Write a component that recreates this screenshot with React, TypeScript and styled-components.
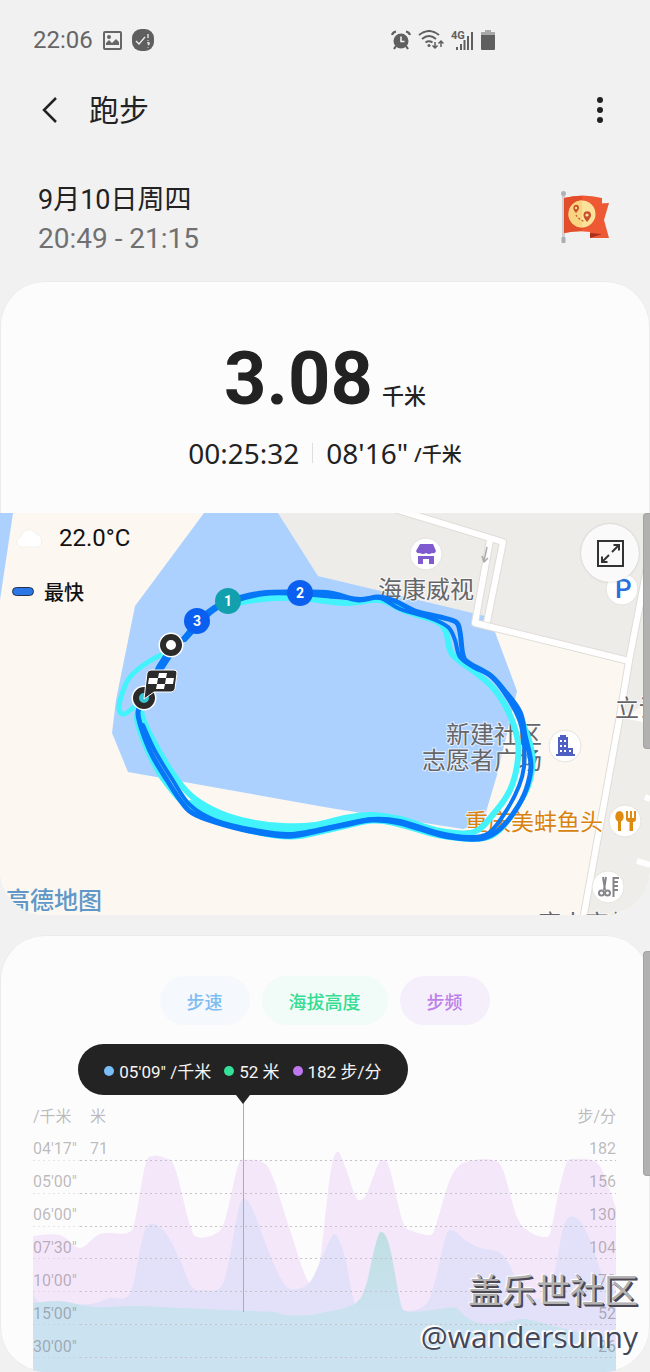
import React from 'react';
import styled, { createGlobalStyle } from 'styled-components';

const GlobalStyle = createGlobalStyle`
  *, *::before, *::after { box-sizing: border-box; }
  body {
    margin: 0;
    background: #f1f1f2;
    color: #222;
    font-family: Roboto, "Noto Sans CJK SC", sans-serif;
  }
  button { border: 0; padding: 0; background: none; font: inherit; color: inherit; cursor: pointer; }
  h1, p { margin: 0; font-weight: 400; }
  svg { display: block; }
`;

type Point = [number, number];

/** Turns a list of points into a smooth curve that passes through all of them. */
function curve(points: Point[]): string {
  const at = (i: number): Point => points[Math.max(0, Math.min(points.length - 1, i))];
  let d = `M${points[0][0]} ${points[0][1]}`;
  for (let i = 0; i < points.length - 1; i++) {
    const [a, b, c, e] = [at(i - 1), at(i), at(i + 1), at(i + 2)];
    d += `C${b[0] + (c[0] - a[0]) / 6} ${b[1] + (c[1] - a[1]) / 6} ${c[0] - (e[0] - b[0]) / 6} ${
      c[1] - (e[1] - b[1]) / 6
    } ${c[0]} ${c[1]}`;
  }
  return d;
}

/* ---------- page shell ---------- */

const Page = styled.main`
  position: relative;
  overflow: hidden;
`;

const StatusBar = styled.div`
  display: flex;
  align-items: center;
  height: 80px;
  padding: 0 33px;
  color: #666;
  font-size: 24px;
`;

const StatusGroup = styled.div<{ $share: number; $gap: number }>`
  display: flex;
  align-items: center;
  gap: ${(p) => p.$gap}px;
  flex: ${(p) => p.$share} 1 0;
`;

const TitleBar = styled.header`
  display: flex;
  align-items: center;
  height: 60px;
  padding: 0 38px;
`;

const Title = styled.h1`
  flex: 1;
  margin-left: 27px;
  padding-top: 2px;
  font-size: 30px;
  line-height: 40px;
`;

const IconButton = styled.button`
  display: flex;
  align-items: center;
  justify-content: center;
  width: 24px;
  height: 40px;
`;

const Session = styled.section`
  display: flex;
  justify-content: space-between;
  padding: 41px 38px 22px;
`;

const SessionDate = styled.p`
  font-size: 27px;
  line-height: 38px;
`;

const SessionTime = styled.p`
  font-size: 28px;
  line-height: 40px;
  color: #707070;
`;

const FlagSlot = styled.div`
  padding: 10px 2px 0 0;
`;

const CardFrame = styled.section`
  position: relative;
  & + & { margin-top: 20px; }
`;

const Card = styled.div`
  overflow: hidden;
  border-radius: 45px;
  background: #fcfcfc;
  box-shadow: inset 0 0 0 1px #ebebec;
`;

const ScrollThumb = styled.div<{ $top: number; $height: number }>`
  position: absolute;
  right: 0;
  top: ${(p) => p.$top}px;
  width: 7px;
  height: ${(p) => p.$height}px;
  border: 1px solid #a2a2a2;
  border-right: 0;
  border-radius: 4px 0 0 4px;
  background: #b1b1b1;
`;

/* ---------- summary ---------- */

const Summary = styled.div`
  display: flex;
  flex-direction: column;
  align-items: center;
  height: 232px;
  padding-top: 58px;
`;

const Distance = styled.p`
  display: flex;
  align-items: baseline;
  gap: 9px;
  height: 80px;
  font-size: 22px;
  font-weight: 500;
  line-height: 80px;
`;

const DistanceValue = styled.span`
  font-size: 74px;
  font-weight: 700;
`;

const Figures = styled.div`
  display: flex;
  align-items: center;
  height: 40px;
  margin-top: 14px;
  font-family: "Noto Sans", "Noto Sans CJK SC", sans-serif;
  font-size: 28px;
  line-height: 40px;
`;

const Divider = styled.span`
  width: 1px;
  height: 20px;
  margin: 0 13px;
  background: #dedede;
`;

const PaceUnit = styled.span`
  margin-left: 6px;
  padding-top: 4px;
  font-size: 20px;
  font-weight: 500;
`;

/* ---------- map ---------- */

const MapArea = styled.div`
  position: relative;
  height: 402px;
  background: #fcf8f1;
`;

const MapCanvas = styled.svg`
  width: 100%;
  height: 100%;
`;

const MapInfo = styled.div`
  position: absolute;
  left: 12px;
  top: 5px;
  color: #111;
`;

const InfoRow = styled.div<{ $strong?: boolean }>`
  display: flex;
  align-items: center;
  height: ${(p) => (p.$strong ? 66 : 40)}px;
  font-size: ${(p) => (p.$strong ? 20 : 24)}px;
  font-weight: ${(p) => (p.$strong ? 500 : 400)};
  gap: ${(p) => (p.$strong ? 10 : 14)}px;
`;

const FastSwatch = styled.span`
  width: 22px;
  height: 9px;
  border: 1px solid #27334d;
  border-radius: 5px;
  background: #2b77e8;
`;

const ExpandButton = styled.button`
  position: absolute;
  right: 11px;
  top: 11px;
  display: flex;
  align-items: center;
  justify-content: center;
  width: 58px;
  height: 58px;
  border-radius: 50%;
  background: #fafafa;
  box-shadow: 0 0 2px #9999;
`;

/* ---------- chart ---------- */

const ChartPanel = styled.div`
  height: 437px;
  padding: 41px 34px 0 33px;
`;

const Filters = styled.div`
  display: flex;
  justify-content: center;
  gap: 12px;
`;

const Pill = styled.button<{ $ink: string; $fill: string }>`
  height: 49px;
  padding: 0 27px;
  border-radius: 25px;
  background: ${(p) => p.$fill};
  color: ${(p) => p.$ink};
  font-size: 18px;
  font-weight: 500;
`;

const Chart = styled.div`
  position: relative;
  height: 347px;
  padding-top: 82px;
`;

const Plot = styled.svg`
  position: absolute;
  left: 0;
  top: 0;
  width: 100%;
  height: 100%;
`;

const AxisTable = styled.table`
  position: relative;
  width: 100%;
  border-collapse: collapse;
  color: rgba(70, 62, 70, 0.36);
  font-size: 16px;
  line-height: 20px;
  th, td {
    height: 33px;
    padding: 0 0 13px;
    font-weight: 400;
    text-align: left;
    vertical-align: top;
  }
  th { height: 32px; padding-bottom: 8px; }
  th:first-child, td:first-child { width: 57px; }
  th:last-child, td:last-child { text-align: right; }
`;

const Tooltip = styled.div`
  position: absolute;
  left: 36%;
  top: 19px;
  transform: translateX(-50%);
  display: flex;
  align-items: center;
  justify-content: center;
  gap: 13px;
  width: 330px;
  height: 51px;
  padding-top: 2px;
  border-radius: 26px;
  background: #232323;
  color: #f5f5f5;
  font-size: 17px;
  white-space: nowrap;
  &::after {
    content: '';
    position: absolute;
    left: 50%;
    top: 100%;
    margin-left: -7px;
    border: 7px solid transparent;
    border-top: 9px solid #232323;
    border-bottom: 0;
  }
`;

const Reading = styled.span<{ $dot: string }>`
  display: flex;
  align-items: center;
  gap: 5px;
  &::before {
    content: '';
    width: 10px;
    height: 10px;
    border-radius: 50%;
    background: ${(p) => p.$dot};
  }
`;

const Watermark = styled.div`
  position: absolute;
  right: 12px;
  bottom: 13px;
  text-align: right;
  font-family: "Noto Sans", "Noto Sans CJK SC", sans-serif;
  pointer-events: none;
`;

const Community = styled.p`
  height: 45px;
  color: #b3b3b3;
  font-size: 34px;
  line-height: 40px;
  text-shadow: 2px 2px 0 #4a4652, 1px 1px 0 #4a4652, -1px -1px 1px #fff;
`;

const Author = styled.p`
  color: #434758;
  font-family: "Open Sans", sans-serif;
  font-size: 30px;
  line-height: 44px;
  text-shadow: -2px -1px 1px #fff, -1px -2px 1px #fff;
`;

/* ---------- icons ---------- */

const PictureIcon = () => (
  <svg width="19" height="19" viewBox="0 0 19 19" aria-hidden="true">
    <rect x="1" y="1" width="17" height="17" rx="1" fill="none" stroke="#666" strokeWidth="2" />
    <circle cx="6" cy="6" r="2" fill="#666" />
    <path d="M3 14V12L6 9 9 12 13 8 16 11V14Z" fill="#666" />
  </svg>
);

const CheckBadgeIcon = () => (
  <svg width="22" height="22" viewBox="0 0 22 22" aria-hidden="true">
    <rect width="22" height="22" rx="9" fill="#5f5f5f" />
    <path
      d="M4 12L7 15 13 8M16 5V9M16 11V11.800M15 14Q18 13 17 15L16 16M16 18V18.500"
      fill="none"
      stroke="#eee"
      strokeWidth="1.300"
    />
  </svg>
);

const AlarmIcon = () => (
  <svg width="20" height="20" viewBox="0 0 20 20" aria-hidden="true">
    <circle cx="10" cy="11" r="7.500" fill="#5f5f5f" />
    <path d="M1 5Q2 2 5 1.500M15 1.500Q18 2 19 5M5 16L3 19M15 16L17 19" stroke="#5f5f5f" strokeWidth="2.200" fill="none" />
    <path d="M10 6.500V11.500H13.500" stroke="#f1f1f2" strokeWidth="1.600" fill="none" />
  </svg>
);

const WifiIcon = () => (
  <svg width="26" height="20" viewBox="0 0 26 20" fill="none" stroke="#5f5f5f" strokeWidth="2" aria-hidden="true">
    <path d="M1 5Q11-3 21 5M4 9Q11 3 18 9M7.500 12.500Q11 10 14.500 12.500" />
    <circle cx="11" cy="15.500" r="1.500" fill="#5f5f5f" stroke="none" />
    <path d="M17 12V18M14.500 15.500L17 18 19.500 15.500M23 17V11M20.500 13.500L23 11 25.500 13.500" strokeWidth="1.500" />
  </svg>
);

const SignalIcon = () => (
  <svg width="23" height="21" viewBox="0 0 23 21" fill="#5f5f5f" aria-hidden="true">
    <text x="0" y="9" fontFamily="Roboto, sans-serif" fontSize="11" fontWeight="700">4G</text>
    <path d="M5 17H7V20H5ZM9 14H11V20H9ZM12.500 10H14.500V20H12.500ZM16 6H18V20H16ZM20 2H22V20H20Z" />
  </svg>
);

const BatteryIcon = () => (
  <svg width="14" height="20" viewBox="0 0 14 20" aria-hidden="true">
    <path d="M4 0H10V2H14V6H0V2H4Z" fill="#a9a9a9" />
    <path d="M0 5H14V19Q14 20 13 20H1Q0 20 0 19Z" fill="#5f5f5f" />
  </svg>
);

const FlagIcon = () => (
  <svg width="50" height="53" viewBox="0 0 50 53" role="img" aria-label="奖励旗帜">
    <path d="M30 13L49 12 44 29 49 47H30Z" fill="#ec5a35" />
    <path d="M30 42L42 43 30 47Z" fill="#a82f1c" />
    <rect x="2" y="4" width="3" height="47" fill="#cfcfd2" />
    <circle cx="3.500" cy="2.500" r="2.500" fill="#aeb3b6" />
    <rect x="1.500" y="46" width="4" height="6" rx="1" fill="#a9aeb2" />
    <path d="M4 7Q22 2 42 7V43Q22 38 4 42Z" fill="#ee5833" />
    <path d="M4 7Q13 5 22 5V40Q13 40 4 42Z" fill="#e24d2c" />
    <circle cx="22" cy="23" r="13.500" fill="#fbe29a" />
    <path d="M22 9.500A13.500 13.500 0 0 0 22 36.500Z" fill="#f8d480" />
    <path
      d="M16 22Q12.500 18 13.500 16A2.800 2.800 0 0 1 19 16Q19.500 18 16 22ZM27 31Q23 26 23.500 23.500A3.800 3.800 0 0 1 31 23.500Q31.500 26 27 31Z"
      fill="#c8502c"
    />
    <circle cx="16" cy="17" r="1.200" fill="#fbe29a" />
    <circle cx="27" cy="24" r="1.600" fill="#fbe29a" />
    <path d="M16 24Q18 28 25 31" stroke="#c8502c" strokeWidth="1.200" strokeDasharray="2 2" fill="none" />
  </svg>
);

const CloudIcon = () => (
  <svg width="33" height="24" viewBox="0 0 33 24" aria-hidden="true">
    <path d="M11 21A5 5 0 0 1 9 11 8 8 0 0 1 24 8 7 7 0 0 1 26 21Z" fill="#fff" stroke="#f4f1ed" />
  </svg>
);

const ExpandIcon = () => (
  <svg width="27" height="27" viewBox="0 0 27 27" fill="none" stroke="#333" strokeWidth="2" aria-hidden="true">
    <rect x="1" y="1" width="25" height="25" />
    <path d="M15 12L22 5M16.500 5H22V10.500M12 15L5 22M5 16.500V22H10.500" />
  </svg>
);

/* ---------- map drawing ---------- */

const blueTrack: Point[] = [
  [171, 650], [185, 637], [197, 622], [212, 609], [228, 601], [262, 593], [300, 592], [330, 593], [358, 600],
  [378, 597], [395, 601], [415, 611], [440, 617], [456, 622], [460, 632], [463, 655], [469, 663], [490, 675],
  [504, 690], [520, 712], [525, 735], [531, 765], [526, 790], [515, 811], [500, 829], [484, 838], [468, 839],
  [440, 835], [400, 823], [372, 820], [340, 826], [292, 836], [260, 833], [225, 825], [196, 815], [183, 804],
  [167, 780], [152, 755], [142, 730], [138, 712], [144, 697], [160, 665], [171, 650],
];

const blueTrackInner: Point[] = [
  [185, 640], [212, 612], [232, 602], [265, 594], [300, 594], [335, 597], [360, 599], [380, 598], [400, 609],
  [430, 618], [448, 627], [455, 640], [460, 657], [475, 668], [492, 677], [509, 700], [520, 722], [524, 745],
  [524, 767], [519, 786], [508, 808], [490, 832], [470, 837], [440, 833], [400, 821], [372, 819], [340, 825],
  [292, 834], [255, 830], [215, 820], [190, 805], [172, 779], [155, 751], [143, 725],
];

const cyanTrack: Point[] = [
  [228, 605], [262, 599], [300, 598], [345, 603], [380, 600], [405, 611], [436, 621], [446, 632], [452, 654],
  [476, 673], [494, 689], [509, 713], [518, 742], [517, 766], [510, 790], [495, 812], [474, 832], [440, 831],
  [400, 819], [370, 815], [345, 818], [315, 825], [282, 826], [250, 822], [220, 813], [195, 799], [178, 781],
  [160, 753], [144, 722], [140, 705],
];

const cyanTrackMiddle: Point[] = [[190, 803], [225, 819], [260, 828], [292, 830], [325, 826], [350, 821], [372, 817]];

const cyanTrackWide: Point[] = [
  [520, 715], [530, 742], [533, 765], [526, 792], [502, 828], [480, 839], [440, 836], [400, 825], [372, 821],
  [330, 830], [292, 837], [250, 831], [195, 812], [165, 782], [148, 752], [137, 722], [138, 712],
];

const cyanLoop: Point[] = [[171, 650], [148, 662], [130, 677], [122, 694], [119, 709], [124, 714], [134, 707], [144, 697]];

const mileMarks = [
  { x: 197, y: 621, label: '3', fill: '#0b5ff0' },
  { x: 228, y: 601, label: '1', fill: '#12a0ae' },
  { x: 300, y: 593, label: '2', fill: '#0b5ff0' },
];

const mapFont = 'Roboto, "Noto Sans CJK SC", sans-serif';

const PlaceDot = ({ x, y }: { x: number; y: number }) => (
  <circle cx={x} cy={y} r="16" fill="#fff" stroke="#e6e3de" />
);

type PlaceNameProps = { x: number; y: number; size?: number; fill?: string; children: string };

const PlaceName = ({ x, y, size = 24, fill = '#66666a', children }: PlaceNameProps) => (
  <text
    x={x}
    y={y}
    fontSize={size}
    fill={fill}
    stroke="#fff"
    strokeWidth="2"
    strokeOpacity="0.7"
    paintOrder="stroke"
    fontFamily={mapFont}
  >
    {children}
  </text>
);

const RouteMap = () => (
  <MapCanvas viewBox="0 513 650 402" preserveAspectRatio="xMidYMid slice" role="img" aria-label="跑步路线">
    <rect y="513" width="650" height="402" fill="#fcf8f1" />
    <path d="M278 513H650V700L622 720 629 661 478 625 318 576Z" fill="#eeece8" />
    <path d="M622 715L650 722V915H587Z" fill="#efede9" />
    <path d="M0 513H13L0 600Z" fill="#acd1ff" />
    <path d="M204 513H278L318 576 485 616 495 632 517 691 497 775 483 822 463 829 330 808 128 772 112 733 116 700 135 606Z" fill="#acd1ff" />
    <g fill="none" strokeLinejoin="round">
      <g stroke="#e0ddd8" strokeWidth="8">
        <path d="M388 507L503 542 487 622M490 540L475 623 629 661M650 552L629 661 620 715 583 920" />
      </g>
      <g stroke="#fff" strokeWidth="6">
        <path d="M388 507L503 542 487 622M490 540L475 623 629 661M650 552L629 661 620 715 583 920M637 861L650 865M645 797L650 799M622 715L650 720" />
      </g>
      <path d="M487 547L484 561M482 556L484 562 488 558" stroke="#aaa" strokeWidth="1.500" />
    </g>

    <PlaceDot x={426} y={554} />
    <path
      d="M420 544H433L436 551Q435 554 432 553 429 555 426 553 423 555 420 553 417 554 416 551ZM418 556H434V564H429V559H423V564H418Z"
      fill="#805bcf"
    />
    <PlaceName x={378} y={598}>海康威视</PlaceName>
    <PlaceDot x={622} y={589} />
    <text x="615" y="598" fontSize="26" fontWeight="500" fill="#2870db" fontFamily={mapFont}>P</text>
    <PlaceName x={615} y={717}>立讯</PlaceName>
    <PlaceName x={446} y={743}>新建社区</PlaceName>
    <PlaceName x={422} y={769}>志愿者广场</PlaceName>
    <PlaceDot x={565} y={746} />
    <path d="M558 737H560V735H566V737H568V748H573V754H575V756H556V754H558Z" fill="#505fc4" />
    <path
      d="M560 740H562V742H560ZM564 740H566V742H564ZM560 745H562V747H560ZM564 745H566V747H564ZM560 750H562V752H560ZM564 750H566V752H564ZM569 750H571V752H569Z"
      fill="#fff"
    />
    <PlaceName x={465} y={830} size={23} fill="#d9830f">重庆美蚌鱼头</PlaceName>
    <PlaceDot x={625} y={821} />
    <path
      d="M619.500 811A4.500 5.500 0 0 1 621 821.500V831H618V821.500A4.500 5.500 0 0 1 619.500 811ZM626 811H628V818H630V811H632V818H634V811H636V819Q636 822 633 822V831H629.500V822Q626 822 626 819Z"
      fill="#e08a10"
    />
    <PlaceDot x={608} y={887} />
    <g fill="none" stroke="#85858a" strokeWidth="2">
      <path d="M603 877L605 890M606 877L604 890M613.500 877V897M613 878H619M613 882H618M613 886H618M613 890H618" />
      <circle cx="601.500" cy="893" r="2.500" />
      <circle cx="607.500" cy="893" r="2.500" />
    </g>
    <PlaceName x={537} y={932}>唐人商都</PlaceName>
    <text x="6" y="909" fontSize="24" fontWeight="500" fill="#5f98c8" fontFamily={mapFont}>高德地图</text>

    <g fill="none" strokeLinecap="round" strokeLinejoin="round">
      <g stroke="#43f3fb">
        <path d={curve(cyanLoop)} strokeWidth="5" />
        <path d={curve(cyanTrack)} strokeWidth="6" />
        <path d={curve(cyanTrackMiddle)} strokeWidth="6" />
        <path d={curve(cyanTrackWide)} strokeWidth="5" />
      </g>
      <g stroke="#0677f6">
        <path d={curve(blueTrackInner)} strokeWidth="4" />
        <path d={curve(blueTrack)} strokeWidth="5" />
      </g>
      <path d="M160 668L171 651" stroke="#0677f6" strokeWidth="8" />
    </g>

    <circle cx="171" cy="645" r="9" fill="#fff" stroke="#fff" strokeWidth="7" />
    <circle cx="171" cy="645" r="8" fill="#fff" stroke="#2b2b2b" strokeWidth="6" />
    <circle cx="144" cy="698" r="9" fill="#fff" stroke="#fff" strokeWidth="7" />
    <circle cx="144" cy="698" r="8" fill="#35c8d6" stroke="#2b2b2b" strokeWidth="6" />
    <path
      d="M151 670H174Q177 670 177 673L175 689Q174 692 171 692H154L144 699 147 673Q148 670 151 670Z"
      fill="#2b2b2b"
      stroke="#fff"
    />
    <path d="M159 673H167L166 678H158ZM149 678H158L157 684H148ZM166 678H174L173 684H165ZM157 684H165L164 689H156Z" fill="#fff" />
    {mileMarks.map((m) => (
      <g key={m.label}>
        <circle cx={m.x} cy={m.y} r="13" fill={m.fill} />
        <text x={m.x} y={m.y + 5} textAnchor="middle" fontSize="14" fontWeight="700" fill="#fff" fontFamily={mapFont}>
          {m.label}
        </text>
      </g>
    ))}
  </MapCanvas>
);

/* ---------- chart data ---------- */

const cadence: Point[] = [
  [33, 1236], [60, 1235], [80, 1248], [100, 1234], [127, 1233], [135, 1220], [145, 1166], [152, 1156], [165, 1158],
  [175, 1168], [190, 1225], [198, 1237], [215, 1234], [225, 1220], [238, 1166], [246, 1160], [262, 1162],
  [272, 1175], [290, 1230], [305, 1275], [312, 1281], [320, 1260], [330, 1176], [337, 1152], [345, 1166],
  [355, 1195], [361, 1200], [367, 1193], [378, 1165], [384, 1160], [390, 1170], [403, 1222], [413, 1231],
  [430, 1235], [436, 1225], [449, 1182], [460, 1165], [475, 1160], [493, 1160], [503, 1170], [517, 1217],
  [530, 1232], [545, 1237], [551, 1230], [559, 1190], [567, 1162], [575, 1159], [592, 1160], [602, 1170], [616, 1208],
];

const pace: Point[] = [
  [33, 1290], [42, 1303], [90, 1304], [110, 1298], [125, 1298], [133, 1285], [142, 1240], [150, 1224], [165, 1232],
  [180, 1260], [192, 1287], [205, 1290], [220, 1288], [228, 1265], [238, 1212], [243, 1199], [252, 1208],
  [270, 1255], [285, 1285], [297, 1289], [310, 1282], [320, 1262], [330, 1240], [336, 1235], [345, 1257],
  [353, 1297], [362, 1312], [400, 1312], [424, 1306], [434, 1285], [446, 1236], [454, 1231], [465, 1240],
  [480, 1248], [499, 1252], [510, 1266], [525, 1295], [545, 1296], [555, 1270], [563, 1228], [570, 1217],
  [580, 1221], [590, 1240], [603, 1276], [616, 1292],
];

const altitude: Point[] = [
  [33, 1303], [60, 1301], [95, 1307], [135, 1306], [180, 1308], [250, 1311], [275, 1312], [285, 1315], [310, 1315],
  [325, 1312], [345, 1308], [358, 1301], [366, 1285], [376, 1243], [382, 1232], [390, 1248], [400, 1300],
  [406, 1311], [425, 1311], [440, 1309], [456, 1308], [466, 1317], [480, 1323], [500, 1323], [524, 1319],
  [550, 1325], [580, 1333], [616, 1345],
];

const area = (points: Point[]) => `${curve(points)}L616 1372L33 1372Z`;

const gridLines = [1160, 1193, 1226, 1258, 1291, 1324, 1357];

const axisRows = [
  ["04'17\"", '71', '182'],
  ["05'00\"", '', '156'],
  ["06'00\"", '', '130'],
  ["07'30\"", '', '104'],
  ["10'00\"", '', '78'],
  ["15'00\"", '', '52'],
  ["30'00\"", '', '26'],
];

const PlotDrawing = () => (
  <Plot viewBox="33 1025 583 347" preserveAspectRatio="none" aria-hidden="true">
    <defs>
      <linearGradient id="altitudeFill" gradientUnits="userSpaceOnUse" x1="0" y1="1232" x2="0" y2="1312">
        <stop offset="0" stopColor="#bfdfe2" />
        <stop offset="1" stopColor="#cbe2f0" />
      </linearGradient>
    </defs>
    <path d={area(cadence)} fill="#f4e7fa" />
    <path d={area(pace)} fill="#e2e1f9" />
    <path d={area(altitude)} fill="url(#altitudeFill)" />
    {gridLines.map((y) => (
      <g key={y} stroke="#c6c2ca" strokeDasharray="2 3">
        <path d={`M33 ${y + 0.5}H80`} strokeOpacity="0.400" />
        <path d={`M80 ${y + 0.5}H616`} />
      </g>
    ))}
    <path d="M243.500 1095V1312" stroke="#aeaab2" />
  </Plot>
);

export default function App() {
  return (
    <Page>
      <GlobalStyle />
      <StatusBar>
        <StatusGroup $share={358} $gap={10}>
          <span>22:06</span>
          <PictureIcon />
          <CheckBadgeIcon />
        </StatusGroup>
        <StatusGroup $share={226} $gap={7}>
          <AlarmIcon />
          <WifiIcon />
          <SignalIcon />
          <BatteryIcon />
        </StatusGroup>
      </StatusBar>

      <TitleBar>
        <IconButton aria-label="返回">
          <svg width="16" height="26" viewBox="0 0 16 26" fill="none" stroke="#222" strokeWidth="2.500">
            <path d="M14 1L2 13 14 25" />
          </svg>
        </IconButton>
        <Title>跑步</Title>
        <IconButton aria-label="更多选项">
          <svg width="6" height="26" viewBox="0 0 6 26" fill="#222">
            <circle cx="3" cy="3" r="3" />
            <circle cx="3" cy="13" r="3" />
            <circle cx="3" cy="23" r="3" />
          </svg>
        </IconButton>
      </TitleBar>

      <Session>
        <div>
          <SessionDate>9月10日周四</SessionDate>
          <SessionTime>20:49 - 21:15</SessionTime>
        </div>
        <FlagSlot>
          <FlagIcon />
        </FlagSlot>
      </Session>

      <CardFrame>
        <Card>
          <Summary>
            <Distance>
              <DistanceValue>3.08</DistanceValue>
              <span>千米</span>
            </Distance>
            <Figures>
              <span>00:25:32</span>
              <Divider />
              <span>08'16"</span>
              <PaceUnit>/千米</PaceUnit>
            </Figures>
          </Summary>
          <MapArea>
            <RouteMap />
            <MapInfo>
              <InfoRow>
                <CloudIcon />
                <span>22.0°C</span>
              </InfoRow>
              <InfoRow $strong>
                <FastSwatch />
                <span>最快</span>
              </InfoRow>
            </MapInfo>
            <ExpandButton aria-label="展开地图">
              <ExpandIcon />
            </ExpandButton>
          </MapArea>
        </Card>
        <ScrollThumb $top={232} $height={236} />
      </CardFrame>

      <CardFrame>
        <Card>
          <ChartPanel>
            <Filters>
              <Pill $ink="#7fbdf2" $fill="#f5f8fd">步速</Pill>
              <Pill $ink="#35dc92" $fill="#f1fcf8">海拔高度</Pill>
              <Pill $ink="#bd7fea" $fill="#f5effb">步频</Pill>
            </Filters>
            <Chart>
              <PlotDrawing />
              <AxisTable>
                <thead>
                  <tr>
                    <th>/千米</th>
                    <th>米</th>
                    <th>步/分</th>
                  </tr>
                </thead>
                <tbody>
                  {axisRows.map(([paceLabel, height, steps]) => (
                    <tr key={paceLabel}>
                      <td>{paceLabel}</td>
                      <td>{height}</td>
                      <td>{steps}</td>
                    </tr>
                  ))}
                </tbody>
              </AxisTable>
              <Tooltip role="status">
                <Reading $dot="#7abcf5">05'09" /千米</Reading>
                <Reading $dot="#35e09a">52 米</Reading>
                <Reading $dot="#bd78f0">182 步/分</Reading>
              </Tooltip>
            </Chart>
          </ChartPanel>
        </Card>
        <ScrollThumb $top={16} $height={225} />
      </CardFrame>

      <Watermark>
        <Community>盖乐世社区</Community>
        <Author>@wandersunny</Author>
      </Watermark>
    </Page>
  );
}
